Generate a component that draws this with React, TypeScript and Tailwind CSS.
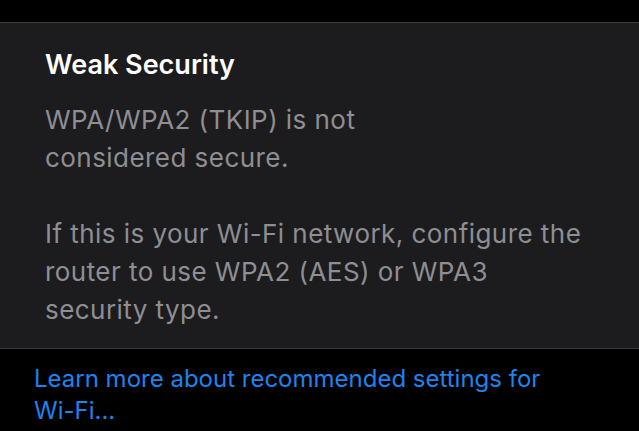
export default function App() {
  return (
    <div className="h-[431px] w-[639px] overflow-hidden bg-black font-['Inter',sans-serif]">
      <div className="h-[22px]" />
      <section className="h-[327px] border-y border-[#3a3a3c] bg-[#1c1c1e] pl-[45px] pt-[24px]">
        <h1 className="text-[27px] font-semibold leading-[36px] text-white">Weak Security</h1>
        <div className="mt-[18px] text-[26px] leading-[38px] tracking-[0.45px] text-[#8e8e93]">
          <p>
            WPA/WPA2 (TKIP) is not
            <br />
            considered secure.
          </p>
          <p className="mt-[38px]">
            If this is your Wi-Fi network, configure the
            <br />
            router to use WPA2 (AES) or WPA3
            <br />
            security type.
          </p>
        </div>
      </section>
      <p className="pl-[34px] pt-[14px] text-[24px] leading-[32px] text-[#1c84f0]">
        Learn more about recommended settings for
        <br />
        Wi-Fi...
      </p>
    </div>
  )
}
